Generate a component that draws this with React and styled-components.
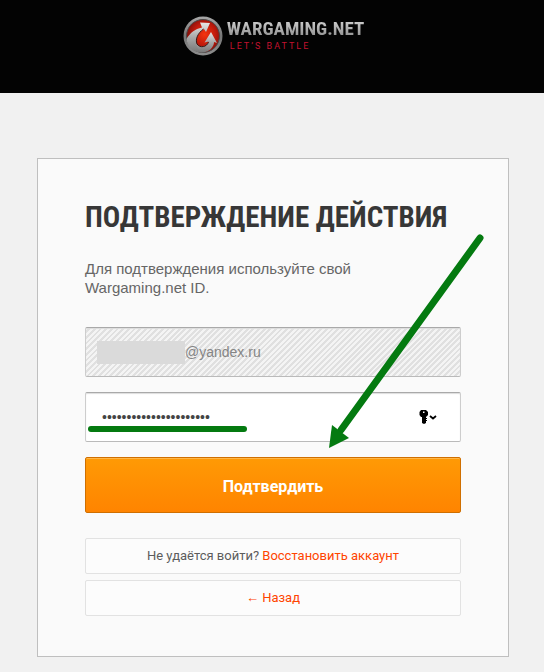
import React from 'react'
import styled, { createGlobalStyle } from 'styled-components'

const sans = '"Liberation Sans", Arial, sans-serif'
const narrow = '"Roboto Condensed", "Liberation Sans Narrow", "Liberation Sans", sans-serif'
const roboto = 'Roboto, "Liberation Sans", sans-serif'
const green = '#047a10'

const App = () => (
	<>
		<GlobalStyle />
		<Header>
			<Brand href="#">
				<Emblem />
				<BrandText>
					<BrandName>WARGAMING.NET</BrandName>
					<Slogan>LET’S BATTLE</Slogan>
				</BrandText>
			</Brand>
		</Header>
		<Main>
			<Card>
				<Title>ПОДТВЕРЖДЕНИЕ ДЕЙСТВИЯ</Title>
				<Lead>Для подтверждения используйте свой Wargaming.net ID.</Lead>
				<form onSubmit={e => e.preventDefault()}>
					<Field $locked>
						<Redacted />
						<Input type="text" aria-label="Эл. почта" defaultValue="@yandex.ru" disabled />
					</Field>
					<Field>
						<Input type="password" aria-label="Пароль" defaultValue="wargamingpassword12345" $inset />
						<KeyButton type="button" aria-label="Сохранённые пароли">
							<KeyIcon />
						</KeyButton>
						<Underline />
					</Field>
					<Submit type="submit">Подтвердить</Submit>
				</form>
				<Note>
					Не удаётся войти? <Link href="#">Восстановить аккаунт</Link>
				</Note>
				<Note>
					<Link href="#"><BackArrow>←</BackArrow> Назад</Link>
				</Note>
				<Arrow viewBox="0 0 160 220">
					<path d="M154 8 L15 200" stroke={green} strokeWidth="7" strokeLinecap="round" />
					<path d="M3 218 L6 195 L23 208 Z" fill={green} />
				</Arrow>
			</Card>
		</Main>
	</>
)

const Emblem = () => (
	<svg width="40" height="40" viewBox="0 0 40 40" aria-hidden="true">
		<defs>
			<linearGradient id="ring" x1="0" y1="0" x2="0" y2="1">
				<stop offset="0" stopColor="#a8a8a8" />
				<stop offset="0.5" stopColor="#777" />
				<stop offset="1" stopColor="#8e8e8e" />
			</linearGradient>
			<radialGradient id="core" cx="0.55" cy="0.45" r="0.55">
				<stop offset="0" stopColor="#f5340f" />
				<stop offset="0.6" stopColor="#c01a0c" />
				<stop offset="1" stopColor="#7d100b" />
			</radialGradient>
			<linearGradient id="steel" x1="0" y1="0" x2="0" y2="1">
				<stop offset="0" stopColor="#e6e6e6" />
				<stop offset="0.5" stopColor="#a8a8a8" />
				<stop offset="1" stopColor="#777" />
			</linearGradient>
		</defs>
		<circle cx="20" cy="20" r="19.5" fill="url(#ring)" />
		<circle cx="20" cy="20" r="16.5" fill="url(#core)" stroke="#4b4b4b" />
		<path d="M3.5 23 C7 17 12 13 19 11.500 L17 6.500 L27 7 L23 16 L21 13 C15 17 12 23 14.500 29 L19 36.500 C11 37 4 31 3.500 23 Z" fill="url(#steel)" />
		<path d="M28 16 L34 27 L31 26 C31 31 26 36.500 19 36.500 C16 35 14 32 13.500 28 C17 32 24 31 25.500 25.500 L21.500 26.500 Z" fill="url(#steel)" />
		<path d="M20.500 13 C15 17 12 23 14 28 C17 32.500 24 31 25.500 26" fill="none" stroke="#3a1512" strokeWidth="1" />
	</svg>
)

const KeyIcon = () => (
	<svg width="18" height="16" viewBox="0 0 18 16" aria-hidden="true">
		<path
			d="M2 1 H7 L9 3 V6 L7 8 V9 H8 V10 H7 V11 H8 V12 H7 V14 L5 15 L3 14 V8 H2 L0.500 6 V3 Z M4 2.500 V4 H5.500 V2.500 Z"
			fill="#000"
			fillRule="evenodd"
		/>
		<path d="M11 7 L14 9.500 L17 7" fill="none" stroke="#000" strokeWidth="1.800" />
	</svg>
)

export default App

const GlobalStyle = createGlobalStyle`
	* {
		box-sizing: border-box;
	}
	body {
		margin: 0;
		background: #f1f1f1;
		font-family: ${sans};
	}
`

const Header = styled.header`
	display: flex;
	justify-content: center;
	height: 93px;
	padding: 16px 0 0 3px;
	background: #030303;
`

const Brand = styled.a`
	display: flex;
	align-items: flex-start;
	gap: 4px;
	text-decoration: none;
`

const BrandText = styled.span`
	display: flex;
	flex-direction: column;
	padding-top: 2px;
`

const BrandName = styled.span`
	font: bold 19px/22px ${narrow};
	color: transparent;
	background: linear-gradient(#d8d8d8, #858585);
	background-clip: text;
`

const Slogan = styled.span`
	padding-left: 3px;
	font: 9px/12px ${roboto};
	letter-spacing: 2px;
	color: #c3122f;
`

const Main = styled.main`
	padding: 65px 35px 15px 37px;
`

const Card = styled.section`
	position: relative;
	padding: 41px 47px 34px;
	background: #fafafa;
	border: 1px solid #bfbfbf;
`

const Title = styled.h1`
	margin: 0;
	font: bold 29px/34px ${narrow};
	color: #373737;
	white-space: nowrap;
`

const Lead = styled.p`
	max-width: 300px;
	margin: 25px 0 30px;
	font-size: 15px;
	line-height: 19px;
	color: #666;
`

const Field = styled.div`
	position: relative;
	display: flex;
	align-items: center;
	height: 50px;
	margin-bottom: 15px;
	padding: 0 23px 0 11px;
	border: 1px solid #cdcdcd;
	border-top: 1px solid #a9a9a9;
	border-bottom-color: #bababa;
	border-radius: 2px;
	box-shadow: inset 0 1px 1px #ddd;
	background: ${props => props.$locked
		? 'repeating-linear-gradient(135deg, #f4f4f4 0 2px, #e0e0e0 2px 4px)'
		: '#fff'};
`

const Redacted = styled.span`
	flex: none;
	width: 88px;
	height: 23px;
	background: #dadada;
`

const Input = styled.input`
	flex: 1;
	min-width: 0;
	padding: 0 0 0 ${props => props.$inset ? '5px' : '0'};
	border: 0;
	outline: none;
	background: transparent;
	font: 14px/20px ${sans};
	color: ${props => props.disabled ? '#858585' : '#444'};
`

const KeyButton = styled.button`
	display: flex;
	padding: 0;
	border: 0;
	background: none;
	cursor: pointer;
`

const Underline = styled.span`
	position: absolute;
	left: 2px;
	bottom: 9px;
	width: 159px;
	height: 6px;
	border-radius: 3px;
	background: ${green};
`

const Submit = styled.button`
	display: block;
	width: 100%;
	height: 56px;
	margin-bottom: 25px;
	padding: 4px 0 0;
	border: 1px solid #cf6f00;
	border-radius: 2px;
	box-shadow: inset 0 1px 0 #ffb648;
	background: linear-gradient(#ff9a05, #ff8400);
	font: bold 16px/20px ${roboto};
	color: #fff;
	cursor: pointer;
`

const Note = styled.p`
	margin: 0 0 6px;
	padding: 8px;
	border: 1px solid #e2e2e2;
	border-radius: 2px;
	background: #fcfcfc;
	font: 13px/18px ${roboto};
	color: #5c5c5c;
	text-align: center;
`

const Link = styled.a`
	color: #ff4400;
	text-decoration: none;
`

const BackArrow = styled.span`
	font-family: ${sans};
`

const Arrow = styled.svg`
	position: absolute;
	top: 71px;
	right: 22px;
	width: 160px;
	height: 220px;
	fill: none;
	pointer-events: none;
`
